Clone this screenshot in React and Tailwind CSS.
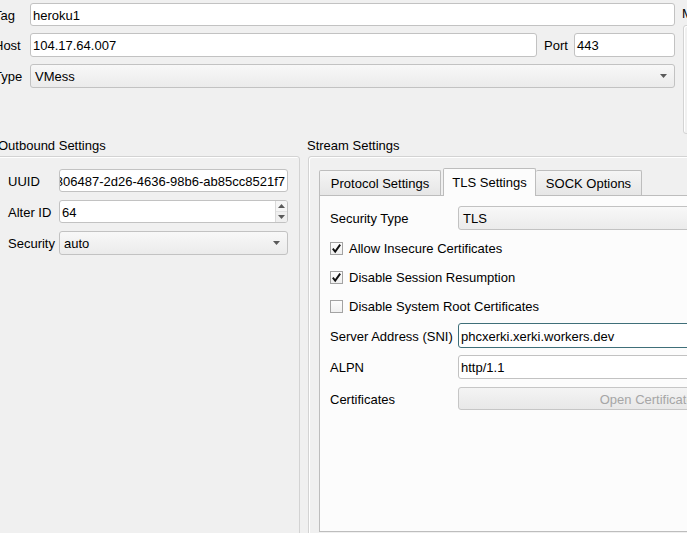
import React from 'react';

const inputCls = 'h-full bg-white border rounded-[3px] flex items-center pl-[2px] pt-[2px] overflow-hidden whitespace-nowrap';
const comboCls = 'h-full border border-[#c2c2c2] rounded-[3px] flex items-center pl-[4px] pr-[7px] bg-gradient-to-b from-[#f8f8f8] to-[#ebebeb] whitespace-nowrap';

const DownArrow = () => (
  <svg width="7" height="4" viewBox="0 0 7 4" className="shrink-0">
    <path d="M0 0 H7 L3.5 4 Z" fill="#5a5a5a" />
  </svg>
);

const Combo = ({ value, className = '' }) => (
  <div className={`${comboCls} ${className}`}>
    <span className="flex-1 pt-[2px]">{value}</span>
    <DownArrow />
  </div>
);

const CheckBox = ({ checked, label }) => (
  <div className="h-[20px] flex items-center">
    <div className="w-[13px] h-[13px] border border-[#a3a3a3] bg-gradient-to-b from-[#fdfdfd] to-[#f0f0f0] flex items-center justify-center">
      {checked && (
        <svg width="11" height="11" viewBox="0 0 11 11">
          <path d="M1.8 5.6 L4.2 8.6 L9.2 1.6" fill="none" stroke="#111" strokeWidth="1.9" />
        </svg>
      )}
    </div>
    <span className="ml-[6px] pt-[2px]">{label}</span>
  </div>
);

const Label = ({ children, className = '' }) => (
  <span className={`shrink-0 pt-[2px] ${className}`}>{children}</span>
);

export default function App() {
  return (
    <div className="w-[687px] h-[533px] overflow-hidden bg-[#f0f0f0] text-[13px] leading-[16px] text-black font-['Liberation_Sans',Arial,sans-serif]">
      <div className="w-[1100px] -ml-[6px]">
        {/* top form */}
        <div className="h-[137px] flex items-start pt-[3px]">
          <div className="w-[681px] flex flex-col">
            <div className="h-[23px] flex items-center">
              <Label className="w-[36px]">Tag</Label>
              <div className={`${inputCls} border-[#c2c2c2] flex-1`}>heroku1</div>
            </div>
            <div className="h-[24px] mt-[7px] flex items-center">
              <Label className="w-[36px]">Host</Label>
              <div className={`${inputCls} border-[#c2c2c2] w-[507px]`}>104.17.64.007</div>
              <Label className="w-[37px] pl-[7px]">Port</Label>
              <div className={`${inputCls} border-[#c2c2c2] flex-1`}>443</div>
            </div>
            <div className="h-[24px] mt-[7px] flex items-center">
              <Label className="w-[36px]">Type</Label>
              <Combo value="VMess" className="flex-1" />
            </div>
          </div>
          <div className="ml-[7px] flex flex-col">
            <span className="mt-[3px] h-[16px]">Mux Settings</span>
            <div className="mt-[3px] ml-[1px] w-[120px] h-[109px] border border-[#d3d3d3] rounded-[3px] shadow-[inset_1px_1px_0_#fff]" />
          </div>
        </div>

        {/* group boxes */}
        <div className="flex items-start">
          {/* Outbound Settings */}
          <div className="w-[306px] flex flex-col">
            <span className="ml-[4px] pt-[1px] h-[17px]">Outbound Settings</span>
            <div className="mt-[2px] h-[420px] border border-[#d3d3d3] rounded-[3px] shadow-[inset_1px_1px_0_#fff] pl-[13px] pt-[12px]">
              <div className="h-[23px] flex items-center">
                <Label className="w-[51px]">UUID</Label>
                <div className={`${inputCls} border-[#c2c2c2] w-[229px] justify-end pr-[2px]`}>
                  <span className="shrink-0">7b306487-2d26-4636-98b6-ab85cc8521f7</span>
                </div>
              </div>
              <div className="h-[23px] mt-[8px] flex items-center">
                <Label className="w-[51px]">Alter ID</Label>
                <div className="h-full w-[229px] bg-white border border-[#c2c2c2] rounded-[3px] flex items-center pl-[2px] overflow-hidden">
                  <span className="flex-1 pt-[2px]">64</span>
                  <div className="w-[12px] h-full flex flex-col border-l border-[#dadada]">
                    <div className="flex-1 flex items-center justify-center bg-[#f6f6f6] border-b border-[#e2e2e2]">
                      <svg width="7" height="4" viewBox="0 0 7 4"><path d="M0 4 H7 L3.5 0 Z" fill="#5a5a5a" /></svg>
                    </div>
                    <div className="flex-1 flex items-center justify-center bg-[#efefef]">
                      <DownArrow />
                    </div>
                  </div>
                </div>
              </div>
              <div className="h-[24px] mt-[8px] flex items-center">
                <Label className="w-[51px]">Security</Label>
                <Combo value="auto" className="w-[229px]" />
              </div>
            </div>
          </div>

          {/* Stream Settings */}
          <div className="ml-[8px] flex flex-col">
            <span className="-ml-[1px] pt-[1px] h-[17px]">Stream Settings</span>
            <div className="mt-[2px] w-[600px] h-[420px] border border-[#d3d3d3] rounded-[3px] shadow-[inset_1px_1px_0_#fff] pl-[10px] pt-[11px]">
              {/* tab bar */}
              <div className="h-[27px] flex items-end relative z-10">
                <div className="w-[122px] h-[25px] pt-[2px] flex items-center justify-center border border-b-0 border-[#bdbdbd] rounded-t-[2px] bg-gradient-to-b from-[#f5f5f5] to-[#e6e6e6]">
                  Protocol Settings
                </div>
                <div className="ml-[2px] w-[93px] h-[28px] -mb-px flex items-center justify-center border border-b-0 border-[#bdbdbd] rounded-t-[2px] bg-[#fcfcfc]">
                  TLS Settings
                </div>
                <div className="w-[106px] h-[25px] pt-[2px] flex items-center justify-center border border-b-0 border-l-0 border-[#bdbdbd] rounded-t-[2px] bg-gradient-to-b from-[#f5f5f5] to-[#e6e6e6]">
                  SOCK Options
                </div>
              </div>
              {/* tab pane */}
              <div className="h-[337px] border border-[#bdbdbd] bg-[#fcfcfc] pl-[10px] pt-[10px]">
                <div className="h-[24px] flex items-center">
                  <Label className="w-[128px]">Security Type</Label>
                  <Combo value="TLS" className="w-[420px]" />
                </div>
                <div className="mt-[8px]">
                  <CheckBox checked label="Allow Insecure Certificates" />
                </div>
                <div className="mt-[9px]">
                  <CheckBox checked label="Disable Session Resumption" />
                </div>
                <div className="mt-[9px]">
                  <CheckBox label="Disable System Root Certificates" />
                </div>
                <div className="h-[25px] mt-[7px] flex items-center">
                  <Label className="w-[128px]">Server Address (SNI)</Label>
                  <div className={`${inputCls} border-[#3f6f79] w-[420px]`}>phcxerki.xerki.workers.dev</div>
                </div>
                <div className="h-[24px] mt-[7px] flex items-center">
                  <Label className="w-[128px]">ALPN</Label>
                  <div className={`${inputCls} border-[#c2c2c2] w-[420px]`}>http/1.1</div>
                </div>
                <div className="h-[23px] mt-[8px] flex items-center">
                  <Label className="w-[128px]">Certificates</Label>
                  <div className="w-[402px] h-full pt-[2px] border border-[#c6c6c6] rounded-[3px] bg-gradient-to-b from-[#f4f4f4] to-[#e8e8e8] flex items-center justify-center text-[#a6a6a6]">
                    Open Certificate File
                  </div>
                </div>
              </div>
            </div>
          </div>
        </div>
      </div>
    </div>
  );
}
